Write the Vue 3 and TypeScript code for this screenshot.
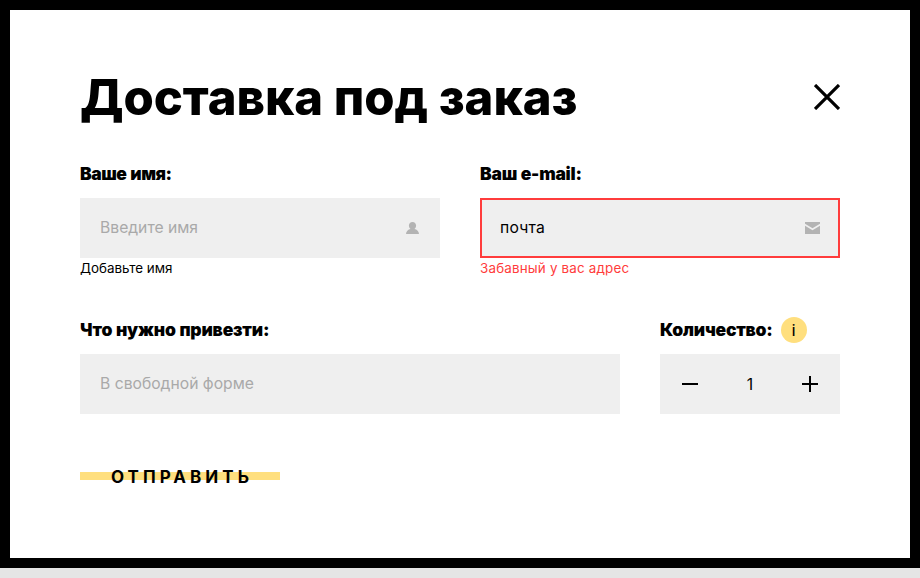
<script setup lang="ts">
import { ref } from 'vue'

const name = ref('')
const email = ref('почта')
const request = ref('')
const amount = ref(1)

function change(step: number) {
  amount.value = Math.max(1, amount.value + step)
}
</script>

<template>
  <section class="modal">
    <header class="modal-header">
      <h2 class="title">Доставка под заказ</h2>
      <button class="close" type="button" aria-label="Закрыть">
        <svg width="26" height="26" viewBox="0 0 26 26" fill="none" stroke="#000" stroke-width="3.2">
          <path d="M1 1 25 25M25 1 1 25" />
        </svg>
      </button>
    </header>

    <form class="form" @submit.prevent>
      <div class="row row-contacts">
        <div class="field">
          <label class="label label-name" for="name">Ваше имя:</label>
          <div class="control">
            <input id="name" v-model="name" class="input" type="text" placeholder="Введите имя" />
            <svg class="icon icon-user" width="13" height="12" viewBox="0 0 13 12" fill="#b3b3b3">
              <path d="M6.5 0C4.4 0 2.9 1.5 2.9 3.6c0 1.4.6 2.6 1.6 3.3C2.1 7.4 0 9.1 0 12h13c0-2.9-2.1-4.600-4.500-5.100C9.500 6.200 10.100 5 10.100 3.600 10.100 1.500 8.600 0 6.500 0Z" />
            </svg>
          </div>
          <p class="hint">Добавьте имя</p>
        </div>
        <div class="field field-error">
          <label class="label" for="email">Ваш e-mail:</label>
          <div class="control">
            <input id="email" v-model="email" class="input input-filled" type="text" />
            <svg class="icon" width="15" height="12" viewBox="0 0 15 12" fill="#b3b3b3">
              <path d="M0 0h15v1.700L7.500 6.200 0 1.700ZM0 3.700 7.500 8.200 15 3.700V12H0Z" />
            </svg>
          </div>
          <p class="hint hint-error">Забавный у вас адрес</p>
        </div>
      </div>

      <div class="row row-order">
        <div class="field">
          <label class="label label-request" for="request">Что нужно привезти:</label>
          <div class="control">
            <input id="request" v-model="request" class="input" type="text" placeholder="В свободной форме" />
          </div>
        </div>
        <div class="field">
          <div class="label label-amount">
            <span>Количество:</span>
            <button class="info" type="button">i</button>
          </div>
          <div class="control counter">
            <button class="step" type="button" aria-label="Меньше" @click="change(-1)">
              <svg width="16" height="16" viewBox="0 0 16 16"><path d="M0 7h16v2H0Z" /></svg>
            </button>
            <span class="amount">{{ amount }}</span>
            <button class="step" type="button" aria-label="Больше" @click="change(1)">
              <svg width="16" height="16" viewBox="0 0 16 16"><path d="M0 7h7V0h2v7h7v2H9v7H7V9H0Z" /></svg>
            </button>
          </div>
        </div>
      </div>

      <button class="submit" type="submit">Отправить</button>
    </form>
  </section>
</template>

<style>
body {
  background: #e5e5e5;
}
</style>

<style scoped>
.modal {
  box-sizing: border-box;
  width: 920px;
  height: 568px;
  padding: 60px 70px;
  border: 10px solid #000;
  background: #fff;
  color: #000;
  font-family: Inter, "Liberation Sans", sans-serif;
}

button {
  padding: 0;
  border: 0;
  background: none;
  color: inherit;
  font: inherit;
  cursor: pointer;
}

svg {
  display: block;
}

.modal-header {
  display: flex;
  justify-content: space-between;
  align-items: center;
  margin-bottom: 38px;
}

.title {
  margin: 0;
  padding-top: 2px;
  font: 800 49px/52px Inter, sans-serif;
  letter-spacing: -0.05px;
  white-space: nowrap;
}

.row {
  display: grid;
  column-gap: 40px;
}

.row-contacts {
  grid-template-columns: 360px 360px;
  margin-bottom: 42px;
}

.row-order {
  grid-template-columns: 540px 180px;
  margin-bottom: 37px;
}

.label {
  display: block;
  height: 24px;
  margin-bottom: 12px;
  font: 900 17.5px/24px Inter, sans-serif;
  letter-spacing: -0.25px;
  word-spacing: 0.5px;
  white-space: nowrap;
}

.label-name {
  letter-spacing: -0.5px;
  word-spacing: 1px;
}

.label-request {
  letter-spacing: -0.2px;
}

.label-amount {
  display: flex;
  align-items: center;
  gap: 8px;
}

.info {
  width: 26px;
  height: 26px;
  flex: none;
  border-radius: 50%;
  background: #ffdf7e;
  font: 400 17px/26px Roboto, sans-serif;
}

.control {
  display: flex;
  align-items: center;
  box-sizing: border-box;
  height: 60px;
  padding: 0 20px;
  background: #efefef;
}

.field-error .control {
  padding: 0 18px;
  border: 2px solid #ff3c3c;
}

.input {
  flex: 1;
  min-width: 0;
  padding: 0;
  border: 0;
  outline: 0;
  background: transparent;
  color: #000;
  font: 400 15.7px/20px Inter, sans-serif;
}

.input-filled {
  letter-spacing: 0.2px;
}

.input::placeholder {
  color: #a9a9a9;
  opacity: 1;
}

.icon {
  flex: none;
}

.icon-user {
  margin-right: 1px;
}

.hint {
  margin: 2px 0 0;
  font-size: 13.4px;
  line-height: 16px;
}

.hint-error {
  color: #ff3c3c;
  letter-spacing: 0.18px;
}

.counter {
  justify-content: space-between;
}

.step {
  width: 20px;
  height: 20px;
  display: grid;
  place-items: center;
}

.amount {
  font-size: 15.7px;
}

.submit {
  display: block;
  width: 200px;
  height: 50px;
  padding: 2px 0 0 4px;
  background: linear-gradient(#ffdf7e, #ffdf7e) center / 100% 8px no-repeat;
  font: 700 17px/48px Inter, sans-serif;
  letter-spacing: 4.05px;
  text-transform: uppercase;
}
</style>
